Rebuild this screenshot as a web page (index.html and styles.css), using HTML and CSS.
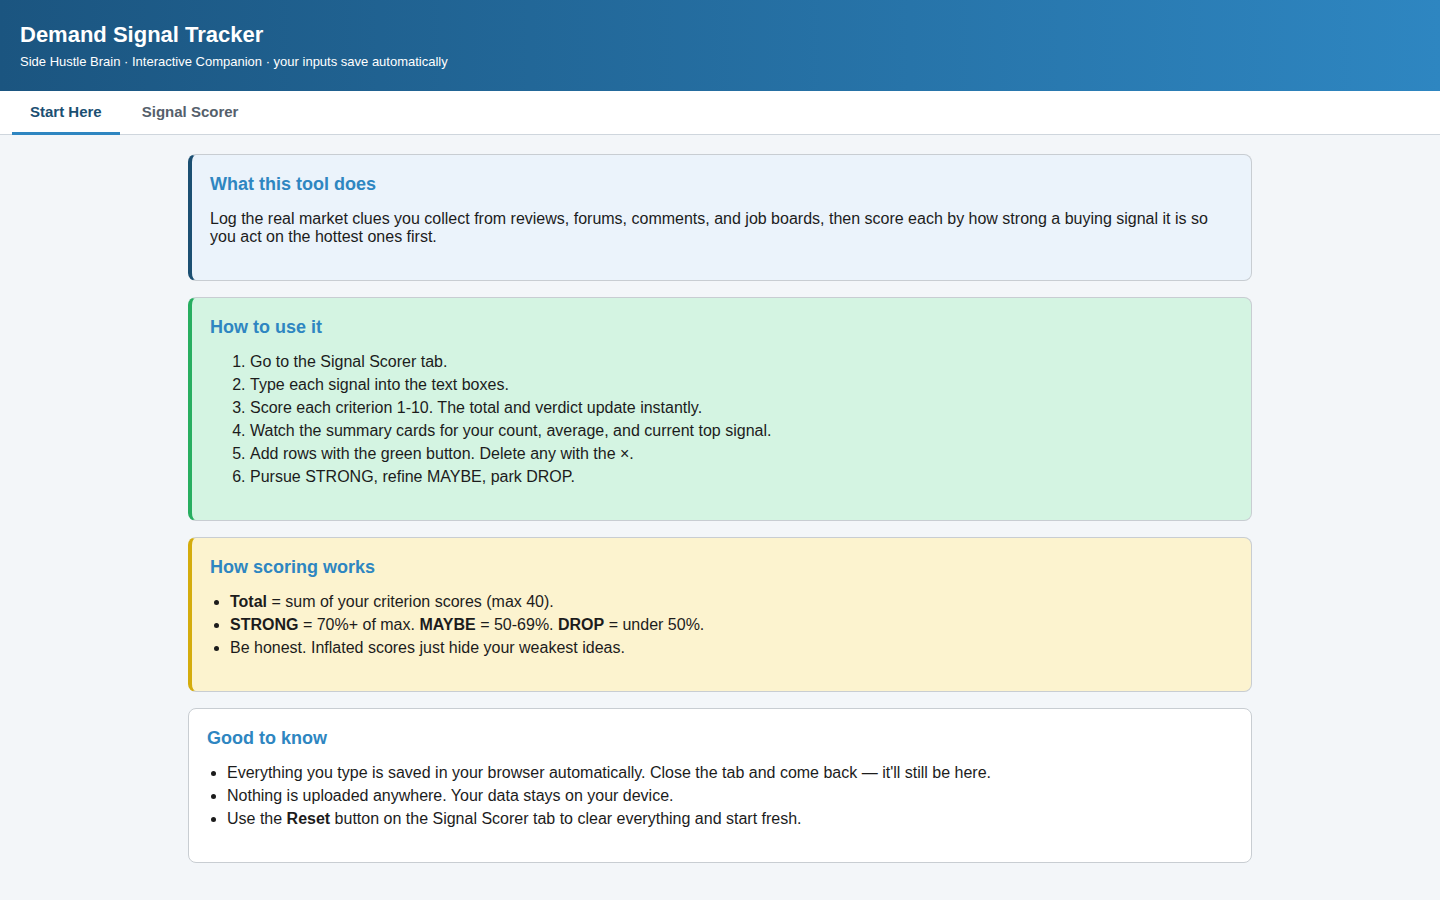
FILE: index.html
```html
<!DOCTYPE html>
<html lang="en">
<head>
  <meta charset="UTF-8" />
  <title>Demand Signal Tracker</title>
  <link rel="stylesheet" href="styles.css">
</head>
<body>

  <header id="top">
    <h1>Demand Signal Tracker</h1>
    <div class="subtitle">Side Hustle Brain · Interactive Companion · your inputs save automatically</div>
  </header>

  <nav id="tabs">
    <button class="tab active">Start Here</button>
    <button class="tab">Signal Scorer</button>
  </nav>

  <main id="content">
    <section class="card info">
      <h2>What this tool does</h2>
      <p>Log the real market clues you collect from reviews, forums, comments, and job boards, then score each by how strong a buying signal it is so you act on the hottest ones first.</p>
    </section>

    <section class="card steps">
      <h2>How to use it</h2>
      <ol>
        <li>Go to the Signal Scorer tab.</li>
        <li>Type each signal into the text boxes.</li>
        <li>Score each criterion 1-10. The total and verdict update instantly.</li>
        <li>Watch the summary cards for your count, average, and current top signal.</li>
        <li>Add rows with the green button. Delete any with the ×.</li>
        <li>Pursue STRONG, refine MAYBE, park DROP.</li>
      </ol>
    </section>

    <section class="card scoring">
      <h2>How scoring works</h2>
      <ul>
        <li><b>Total</b> = sum of your criterion scores (max 40).</li>
        <li><b>STRONG</b> = 70%+ of max. <b>MAYBE</b> = 50-69%. <b>DROP</b> = under 50%.</li>
        <li>Be honest. Inflated scores just hide your weakest ideas.</li>
      </ul>
    </section>

    <section class="card plain">
      <h2>Good to know</h2>
      <ul>
        <li>Everything you type is saved in your browser automatically. Close the tab and come back — it'll still be here.</li>
        <li>Nothing is uploaded anywhere. Your data stays on your device.</li>
        <li>Use the <b>Reset</b> button on the Signal Scorer tab to clear everything and start fresh.</li>
      </ul>
    </section>
  </main>

</body>
</html>
```

FILE: styles.css
```css
body {
  margin: 0;
  padding: 0;
  background: #f3f6f9;
  color: #1c1c1c;
  font-family: "Liberation Sans", Arial, sans-serif;
}
#top {
  padding: 22px 20px 21px;
  background: linear-gradient(90deg, #1b5580 0%, #2e86c1 100%);
  color: #fff;
}
#top h1 {
  margin: 0;
  font-size: 22px;
  line-height: 26px;
}
#top .subtitle {
  margin-top: 6px;
  font-size: 13px;
  line-height: 16px;
}
#tabs {
  display: flex;
  gap: 4px;
  padding-left: 12px;
  background: #fff;
  border-bottom: 1px solid #cfd6dd;
}
.tab {
  padding: 12px 18px 11px;
  margin-bottom: -1px;
  border: 0;
  border-bottom: 3px solid transparent;
  background: none;
  font-family: inherit;
  font-size: 15px;
  line-height: 18px;
  font-weight: bold;
  color: #55606b;
  cursor: pointer;
}
.tab.active {
  color: #1b4f72;
  border-bottom-color: #2e86c1;
}
#content {
  max-width: 1064px;
  margin: 19px auto;
}
.card {
  margin-bottom: 16px;
  padding: 18px 18px;
  border: 1px solid #c8cdd2;
  border-radius: 8px;
  background: #fff;
  font-size: 16px;
  line-height: 18px;
}
.card h2 {
  margin: 0 0 15px;
  font-size: 18px;
  line-height: 22px;
  color: #2e86c1;
}
.card p {
  margin: 0 0 16px;
}
.card ol,
.card ul {
  margin: 0 0 16px;
}
.card ol {
  padding-left: 40px;
}
.card ul {
  padding-left: 20px;
}
.card li {
  margin-bottom: 5px;
}
.info {
  border-left: 4px solid #1b4f72;
  background: #ebf3fb;
}
.steps {
  border-left: 4px solid #27ae60;
  background: #d4f4e2;
}
.scoring {
  border-left: 4px solid #d4ac0d;
  background: #fcf3cf;
}
```
